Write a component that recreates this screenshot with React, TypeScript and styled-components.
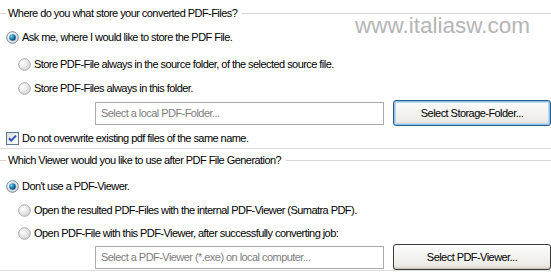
import React from "react";
import styled, { createGlobalStyle } from "styled-components";

const GlobalStyle = createGlobalStyle`
  html, body {
    margin: 0;
    padding: 0;
    background: #ffffff;
  }
  body {
    width: 551px;
    height: 275px;
    overflow: hidden;
    font-family: "Liberation Sans", Arial, sans-serif;
    font-size: 11px;
    letter-spacing: -0.55px;
    color: #000;
  }
`;

const Page = styled.div`
  position: relative;
  width: 551px;
  height: 275px;
  overflow: hidden;
`;

const Watermark = styled.div`
  position: absolute;
  top: 13px;
  left: 355px;
  font-family: "Liberation Sans", Arial, sans-serif;
  font-size: 22.5px;
  letter-spacing: 0;
  color: #b5b5b5;
`;

const Group = styled.section<{ $top: number }>`
  margin-top: ${(p) => p.$top}px;
  border-bottom: 1px solid #dcdcdc;
  display: flex;
  flex-direction: column;
`;

const Legend = styled.div`
  height: 14px;
  display: flex;
  align-items: center;
  gap: 2px;

  &::before {
    content: "";
    width: 6px;
    height: 1px;
    background: #d6d6d6;
  }
  &::after {
    content: "";
    flex: 1;
    height: 1px;
    background: #d6d6d6;
    margin-left: 3px;
  }
`;

const Row = styled.label<{ $top: number; $indent: number }>`
  margin-top: ${(p) => p.$top}px;
  height: 20px;
  padding-left: ${(p) => p.$indent}px;
  display: flex;
  align-items: center;
  gap: 3px;
  white-space: nowrap;
`;

const PickRow = styled.div<{ $top: number }>`
  margin-top: ${(p) => p.$top}px;
  height: 26px;
  padding-left: 95px;
  display: flex;
  align-items: center;
  gap: 9px;
`;

const Field = styled.div`
  box-sizing: border-box;
  width: 289px;
  height: 23px;
  border: 1px solid #a7abb0;
  padding: 0 5px;
  display: flex;
  align-items: center;
  color: #7d7d7d;
  background: #fff;
`;

const Button = styled.button<{ $default?: boolean }>`
  box-sizing: border-box;
  width: 158px;
  height: 26px;
  border-radius: 3px;
  border: 1px solid ${(p) => (p.$default ? "#2c5e8c" : "#3a3a3a")};
  background: linear-gradient(#fdfdfd, #ecebe6 85%, #d6d0c5);
  font-family: "Liberation Sans", Arial, sans-serif;
  font-size: 11px;
  letter-spacing: -0.55px;
  color: #000;
  padding: 0;
  box-shadow: ${(p) =>
    p.$default
      ? "inset 0 0 0 1px #8fc0e8, inset 0 0 0 2px #b9d8f2"
      : "inset 0 -1px 0 #c9c3b8"};
`;

const RadioIcon = ({ on }: { on?: boolean }) => (
  <svg width="13" height="13" viewBox="0 0 13 13">
    <defs>
      <radialGradient id="rbg" cx="0.35" cy="0.35" r="0.7">
        <stop offset="0" stopColor="#ffffff" />
        <stop offset="1" stopColor="#d4d4d4" />
      </radialGradient>
      <radialGradient id="rdot" cx="0.35" cy="0.35" r="0.7">
        <stop offset="0" stopColor="#7fd0f0" />
        <stop offset="0.5" stopColor="#1f86b8" />
        <stop offset="1" stopColor="#0b3f66" />
      </radialGradient>
    </defs>
    <circle cx="6.5" cy="6.5" r="5.8" fill="url(#rbg)" stroke={on ? "#6f8aa0" : "#a9a9a9"} strokeWidth="1" />
    {on && <circle cx="6.5" cy="6.5" r="3.3" fill="url(#rdot)" />}
  </svg>
);

const CheckIcon = () => (
  <svg width="13" height="13" viewBox="0 0 13 13">
    <defs>
      <linearGradient id="cbg" x1="0" y1="0" x2="1" y2="1">
        <stop offset="0" stopColor="#dcdcd6" />
        <stop offset="1" stopColor="#ffffff" />
      </linearGradient>
    </defs>
    <rect x="0.5" y="0.5" width="12" height="12" fill="url(#cbg)" stroke="#5b7a9a" />
    <path d="M3 6.2 L5.2 8.6 L10 3.6" fill="none" stroke="#2f52b8" strokeWidth="2" />
  </svg>
);

export default function App() {
  return (
    <>
      <GlobalStyle />
      <Page>
        <Watermark>www.italiasw.com</Watermark>

        <Group $top={6}>
          <Legend>Where do you what store your converted PDF-Files?</Legend>
          <Row $top={7} $indent={6}>
            <RadioIcon on />
            Ask me, where I would like to store the PDF File.
          </Row>
          <Row $top={7} $indent={18}>
            <RadioIcon />
            Store PDF-File always in the source folder, of the selected source file.
          </Row>
          <Row $top={4} $indent={18}>
            <RadioIcon />
            Store PDF-Files always in this folder.
          </Row>
          <PickRow $top={2}>
            <Field>Select a local PDF-Folder...</Field>
            <Button $default>Select Storage-Folder...</Button>
          </PickRow>
          <Row $top={2} $indent={6}>
            <CheckIcon />
            Do not overwrite existing pdf files of the same name.
          </Row>
        </Group>

        <Group $top={4}>
          <Legend>Which Viewer would you like to use after PDF File Generation?</Legend>
          <Row $top={9} $indent={6}>
            <RadioIcon on />
            Don't use a PDF-Viewer.
          </Row>
          <Row $top={4} $indent={18}>
            <RadioIcon />
            Open the resulted PDF-Files with the internal PDF-Viewer (Sumatra PDF).
          </Row>
          <Row $top={3} $indent={18}>
            <RadioIcon />
            Open PDF-File with this PDF-Viewer, after successfully converting job:
          </Row>
          <PickRow $top={1}>
            <Field>Select a PDF-Viewer (*.exe) on local computer...</Field>
            <Button>Select PDF-Viewer...</Button>
          </PickRow>
        </Group>
      </Page>
    </>
  );
}
